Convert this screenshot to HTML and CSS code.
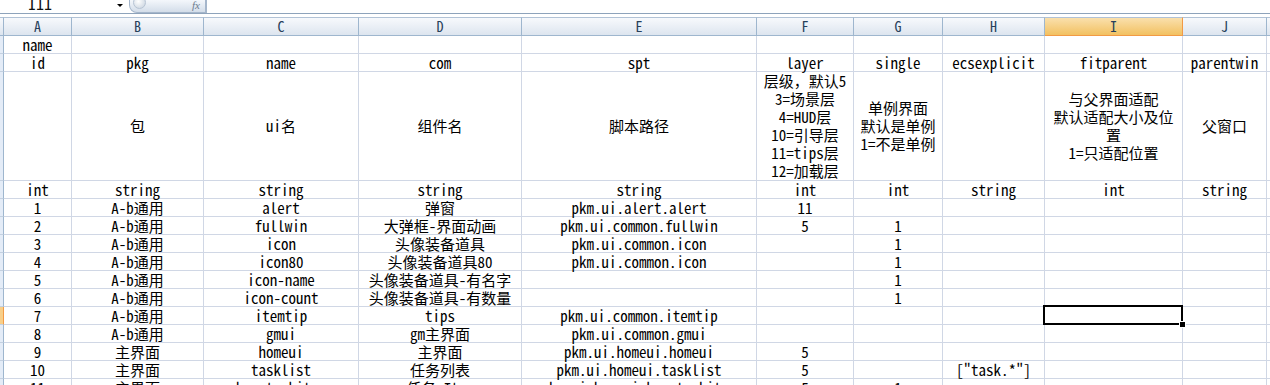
FILE: index.html
```html
<!DOCTYPE html>
<html lang="zh-CN">

<head>
    <meta charset="UTF-8">
    <title>uiconfig.xlsx</title>
    <link rel="stylesheet" href="styles.css">
</head>

<body>
    <div class="formula-bar">
        <div class="name-box">I11</div>
        <div class="name-drop"></div>
        <div class="fx-btn">
            <span class="fx-knob"></span>
            <span class="fx-label">fx</span>
        </div>
        <div class="formula-input"></div>
    </div>

    <table class="sheet">
        <colgroup>
            <col class="w-rh">
            <col class="w-a">
            <col class="w-b">
            <col class="w-c">
            <col class="w-d">
            <col class="w-e">
            <col class="w-f">
            <col class="w-g">
            <col class="w-h">
            <col class="w-i">
            <col class="w-j">
            <col class="w-k">
        </colgroup>
        <thead>
            <tr>
                <th class="corner"></th>
                <th>A</th>
                <th>B</th>
                <th>C</th>
                <th>D</th>
                <th>E</th>
                <th>F</th>
                <th>G</th>
                <th>H</th>
                <th class="current">I</th>
                <th>J</th>
                <th></th>
            </tr>
        </thead>
        <tbody>
            <tr>
                <th class="rh"></th>
                <td>name</td>
                <td></td><td></td><td></td><td></td><td></td><td></td><td></td><td></td><td></td><td></td>
            </tr>
            <tr>
                <th class="rh"></th>
                <td>id</td>
                <td>pkg</td>
                <td>name</td>
                <td>com</td>
                <td>spt</td>
                <td>layer</td>
                <td>single</td>
                <td>ecsexplicit</td>
                <td>fitparent</td>
                <td>parentwin</td>
                <td></td>
            </tr>
            <tr class="desc">
                <th class="rh"></th>
                <td></td>
                <td>包</td>
                <td>ui名</td>
                <td>组件名</td>
                <td>脚本路径</td>
                <td>层级，默认5<br>3=场景层<br>4=HUD层<br>10=引导层<br>11=tips层<br>12=加载层</td>
                <td>单例界面<br>默认是单例<br>1=不是单例</td>
                <td></td>
                <td>与父界面适配<br>默认适配大小及位<br>置<br>1=只适配位置</td>
                <td>父窗口</td>
                <td></td>
            </tr>
            <tr>
                <th class="rh"></th>
                <td>int</td>
                <td>string</td>
                <td>string</td>
                <td>string</td>
                <td>string</td>
                <td>int</td>
                <td>int</td>
                <td>string</td>
                <td>int</td>
                <td>string</td>
                <td></td>
            </tr>
            <tr>
                <th class="rh"></th>
                <td>1</td><td>A-b通用</td><td>alert</td><td>弹窗</td><td>pkm.ui.alert.alert</td>
                <td>11</td><td></td><td></td><td></td><td></td><td></td>
            </tr>
            <tr>
                <th class="rh"></th>
                <td>2</td><td>A-b通用</td><td>fullwin</td><td>大弹框-界面动画</td><td>pkm.ui.common.fullwin</td>
                <td>5</td><td>1</td><td></td><td></td><td></td><td></td>
            </tr>
            <tr>
                <th class="rh"></th>
                <td>3</td><td>A-b通用</td><td>icon</td><td>头像装备道具</td><td>pkm.ui.common.icon</td>
                <td></td><td>1</td><td></td><td></td><td></td><td></td>
            </tr>
            <tr>
                <th class="rh"></th>
                <td>4</td><td>A-b通用</td><td>icon80</td><td>头像装备道具80</td><td>pkm.ui.common.icon</td>
                <td></td><td>1</td><td></td><td></td><td></td><td></td>
            </tr>
            <tr>
                <th class="rh"></th>
                <td>5</td><td>A-b通用</td><td>icon-name</td><td>头像装备道具-有名字</td><td></td>
                <td></td><td>1</td><td></td><td></td><td></td><td></td>
            </tr>
            <tr>
                <th class="rh"></th>
                <td>6</td><td>A-b通用</td><td>icon-count</td><td>头像装备道具-有数量</td><td></td>
                <td></td><td>1</td><td></td><td></td><td></td><td></td>
            </tr>
            <tr>
                <th class="rh current"></th>
                <td>7</td><td>A-b通用</td><td>itemtip</td><td>tips</td><td>pkm.ui.common.itemtip</td>
                <td></td><td></td><td></td><td class="active"></td><td></td><td></td>
            </tr>
            <tr>
                <th class="rh"></th>
                <td>8</td><td>A-b通用</td><td>gmui</td><td>gm主界面</td><td>pkm.ui.common.gmui</td>
                <td></td><td></td><td></td><td></td><td></td><td></td>
            </tr>
            <tr>
                <th class="rh"></th>
                <td>9</td><td>主界面</td><td>homeui</td><td>主界面</td><td>pkm.ui.homeui.homeui</td>
                <td>5</td><td></td><td></td><td></td><td></td><td></td>
            </tr>
            <tr>
                <th class="rh"></th>
                <td>10</td><td>主界面</td><td>tasklist</td><td>任务列表</td><td>pkm.ui.homeui.tasklist</td>
                <td>5</td><td></td><td>["task.*"]</td><td></td><td></td><td></td>
            </tr>
            <tr>
                <th class="rh"></th>
                <td>11</td><td>主界面</td><td>hometaskitem</td><td>任务-Item</td><td>pkm.ui.homeui.hometaskitem</td>
                <td>5</td><td>1</td><td></td><td></td><td></td><td></td>
            </tr>
        </tbody>
    </table>
</body>

</html>
```

FILE: styles.css
```css
body {
    margin: 0;
    width: 1270px;
    height: 385px;
    overflow: hidden;
    background-color: #fff;
    color: #000;
    font-family: "Noto Sans Mono CJK SC", "Liberation Mono", "Noto Sans CJK SC", monospace;
    font-size: 15px;
}

/* строка формул */
.formula-bar {
    display: flex;
    height: 13px;
    border-bottom: 1px solid #8ea3bb;
    margin-bottom: 3px;
    overflow: hidden;
}

.name-box {
    width: 89px;
    padding-left: 28px;
    margin-top: -5px;
    line-height: 17px;
    font-size: 16px;
    color: #111;
}

.name-drop {
    width: 0;
    height: 0;
    margin: 4px 0 0 0;
    border-left: 3px solid transparent;
    border-right: 3px solid transparent;
    border-top: 3px solid #000;
}

.fx-btn {
    position: relative;
    width: 75px;
    height: 12px;
    margin-left: 6px;
    border: 1px solid #a5b6cb;
    border-top: none;
    border-radius: 0 0 0 8px;
    background: linear-gradient(#f4f7fb, #d3dde9);
}

.fx-knob {
    position: absolute;
    left: 3px;
    top: -4px;
    width: 11px;
    height: 11px;
    border-radius: 50%;
    background: radial-gradient(circle at 40% 40%, #fff, #c4cfdc);
    border: 1px solid #b6c3d3;
}

.fx-label {
    position: absolute;
    right: 5px;
    top: -1px;
    font-family: "Liberation Serif", serif;
    font-style: italic;
    font-size: 11px;
    line-height: 12px;
    color: #6c7b8e;
}

.formula-input {
    flex: 1;
    border-left: 1px solid #a5b6cb;
}

/* лист */
.sheet {
    table-layout: fixed;
    border-collapse: separate;
    border-spacing: 0;
    width: 1327px;
}

.w-rh { width: 4px; }
.w-a { width: 68px; }
.w-b { width: 132px; }
.w-c { width: 155px; }
.w-d { width: 163px; }
.w-e { width: 235px; }
.w-f { width: 97px; }
.w-g { width: 89px; }
.w-h { width: 102px; }
.w-i { width: 138px; }
.w-j { width: 84px; }
.w-k { width: 60px; }

thead tr {
    height: 19px;
}

thead th {
    padding: 0;
    border-top: 1px solid #b1c2d6;
    border-bottom: 1px solid #9eb6ce;
    border-right: 1px solid #9eb6ce;
    background: linear-gradient(#f7f9fc, #dde5ef);
    color: #27405a;
    font-weight: normal;
    font-size: 14px;
    line-height: 17px;
    text-align: center;
}

thead th.current {
    background: linear-gradient(#fae0ad, #f2c161);
    border-right-color: #f29a45;
    border-bottom-color: #f29a45;
}

tbody tr {
    height: 18px;
}

tbody tr.desc {
    height: 108px;
}

th.rh {
    padding: 0;
    background-color: #e4ecf7;
    border-right: 1px solid #9eb6ce;
    border-bottom: 1px solid #c3d0e0;
}

th.rh.current {
    background-color: #f8cf89;
    border-right-color: #f29a45;
}

td {
    padding: 0;
    border-right: 1px solid #d0d7e5;
    border-bottom: 1px solid #d0d7e5;
    text-align: center;
    vertical-align: middle;
    white-space: nowrap;
    line-height: 17px;
}

tr.desc td {
    line-height: 18px;
}

td.active {
    position: relative;
}

td.active::after {
    content: "";
    position: absolute;
    left: -2px;
    top: -2px;
    right: -1px;
    bottom: -1px;
    border: 2px solid #000;
}

td.active::before {
    content: "";
    position: absolute;
    right: -4px;
    bottom: -4px;
    width: 5px;
    height: 5px;
    background-color: #000;
    border: 1px solid #fff;
    z-index: 1;
}
```
